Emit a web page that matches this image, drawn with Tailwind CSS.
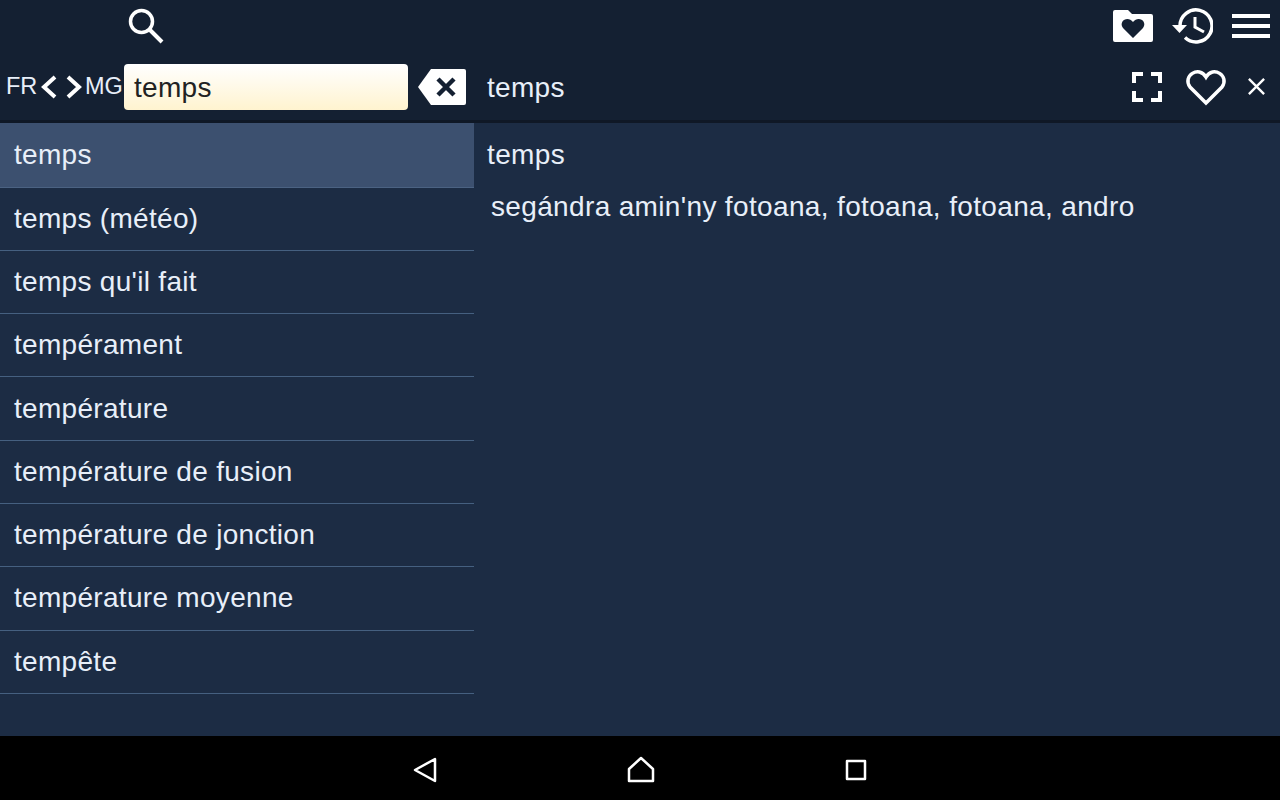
<!DOCTYPE html>
<html lang="en">
<head>
    <meta charset="UTF-8">
    <meta name="viewport" content="width=device-width, initial-scale=1.0">
    <title>Dictionary</title>
    <script src="https://cdn.jsdelivr.net/npm/@tailwindcss/browser@4"></script>
</head>
<body class="w-[1280px] h-[800px] overflow-hidden flex flex-col bg-[#1c2c44] font-['Liberation_Sans',sans-serif] text-[#e8eff9]">
    <!-- top toolbar -->
    <header class="h-[123px] shrink-0 flex flex-col bg-[#142032] border-b-[3px] border-[#0f1826]">
        <div class="h-[52px] flex items-center">
            <div class="w-[474px] pl-[125px] pt-[1px]">
                <svg class="w-[40px] h-[40px]" viewBox="0 0 40 40" fill="none" stroke="#fff" stroke-width="3.5">
                    <circle cx="16.500" cy="14.500" r="11"/>
                    <path d="M25 23L37 35" stroke-width="4"/>
                </svg>
            </div>
            <div class="flex-1 flex items-center justify-end pr-[10px]">
                <svg class="w-[42px] h-[34px]" viewBox="0 0 42 34">
                    <path fill="#fff" d="M3 1h13l4 4h19a2 2 0 0 1 2 2v24a2 2 0 0 1-2 2H3a2 2 0 0 1-2-2V3a2 2 0 0 1 2-2z"/>
                    <path fill="#142032" d="M21 29l-10-10c-5-7 5-13 10-6 5-7 15-1 10 6z"/>
                </svg>
                <svg class="w-[42px] h-[38px] ml-[17px]" viewBox="0 0 42 38" fill="none" stroke="#fff">
                    <path stroke-width="3.500" d="M9 19a16 16 0 1 1 5 11.500"/>
                    <path fill="#fff" stroke="none" d="M1 18h15l-7.500 8z"/>
                    <path stroke-width="3" d="M24 10v10l9 5"/>
                </svg>
                <div class="w-[38px] ml-[19px] flex flex-col gap-[6px]">
                    <div class="h-[4px] bg-white"></div>
                    <div class="h-[4px] bg-white"></div>
                    <div class="h-[4px] bg-white"></div>
                </div>
            </div>
        </div>
        <div class="h-[68px] flex items-center">
            <div class="w-[474px] flex items-center pl-[6px] pt-[1px]">
                <span class="w-[32px] text-[23.500px]">FR</span>
                <svg class="w-[20px] h-[24px] ml-[2px] shrink-0" viewBox="0 0 20 24" fill="none" stroke="#fff" stroke-width="4"><path d="M15 2L4 12l11 10"/></svg>
                <svg class="w-[20px] h-[24px] ml-[3px] shrink-0" viewBox="0 0 20 24" fill="none" stroke="#fff" stroke-width="4"><path d="M5 2l11 10L5 22"/></svg>
                <span class="w-[39px] text-[23.500px] ml-[2px]">MG</span>
                <div class="w-[284px] h-[46px] shrink-0 rounded-[4px] bg-gradient-to-b from-white to-[#fff3cf] flex items-center pl-[10px] pt-[2px] text-[28px] tracking-[0.3px] text-[#222]">temps</div>
                <svg class="w-[50px] h-[38px] ml-[9px] shrink-0" viewBox="0 0 50 38">
                    <path fill="#fff" d="M14 1h33a2 2 0 0 1 2 2v32a2 2 0 0 1-2 2H14L1 19z"/>
                    <path fill="none" stroke="#142032" stroke-width="4.500" d="M21 11l16 16M37 11L21 27"/>
                </svg>
            </div>
            <div class="flex-1 flex items-center pl-[13px] pr-[14px] pt-[1px]">
                <span class="text-[28px] tracking-[0.3px] flex-1 pt-[2px]">temps</span>
                <svg class="w-[30px] h-[30px] mr-[23px]" viewBox="0 0 30 30" fill="none" stroke="#fff" stroke-width="4">
                    <path d="M2 11V2h9M19 2h9v9M28 19v9h-9M11 28H2v-9"/>
                </svg>
                <svg class="w-[42px] h-[38px] mr-[20px]" viewBox="0 0 42 38" fill="none" stroke="#fff" stroke-width="3.500">
                    <path d="M21 35L5 19C-3 8 14-3 21 9 28-3 45 8 37 19z"/>
                </svg>
                <svg class="w-[19px] h-[19px]" viewBox="0 0 20 20" fill="none" stroke="#fff" stroke-width="2.500"><path d="M2 2l16 16M18 2L2 18"/></svg>
            </div>
        </div>
    </header>

    <main class="flex-1 flex min-h-0">
        <ul class="w-[474px] shrink-0 text-[28px] tracking-[0.3px] leading-[34px]">
            <li class="h-[64.500px] flex items-center pl-[14px] bg-[#3c506f] border-b border-[#4b6282]">temps</li>
            <li class="h-[63.300px] flex items-center pl-[14px] border-b border-[#456080]">temps (météo)</li>
            <li class="h-[63.300px] flex items-center pl-[14px] border-b border-[#456080]">temps qu'il fait</li>
            <li class="h-[63.300px] flex items-center pl-[14px] border-b border-[#456080]">tempérament</li>
            <li class="h-[63.300px] flex items-center pl-[14px] border-b border-[#456080]">température</li>
            <li class="h-[63.300px] flex items-center pl-[14px] border-b border-[#456080]">température de fusion</li>
            <li class="h-[63.300px] flex items-center pl-[14px] border-b border-[#456080]">température de jonction</li>
            <li class="h-[63.300px] flex items-center pl-[14px] border-b border-[#456080]">température moyenne</li>
            <li class="h-[63.300px] flex items-center pl-[14px] border-b border-[#456080]">tempête</li>
        </ul>
        <section class="flex-1 text-[28px] tracking-[0.35px] leading-[34px] pl-[13px] pt-[15px]">
            <p>temps</p>
            <p class="pl-[4px] mt-[18px]">segándra amin'ny fotoana, fotoana, fotoana, andro</p>
        </section>
    </main>

    <!-- android nav bar -->
    <footer class="h-[64px] shrink-0 bg-black flex items-center justify-center gap-[189px] pt-[4px]">
        <svg class="w-[26px] h-[28px]" viewBox="0 0 26 28" fill="none" stroke="#fff" stroke-width="2.500" stroke-linejoin="round"><path d="M23 3v22L3 14z"/></svg>
        <svg class="w-[28px] h-[28px]" viewBox="0 0 28 28" fill="none" stroke="#fff" stroke-width="2.500" stroke-linejoin="round"><path d="M14 2L2 13v12h24V13z"/></svg>
        <svg class="w-[24px] h-[24px]" viewBox="0 0 24 24" fill="none" stroke="#fff" stroke-width="2.500" stroke-linejoin="round"><path d="M3 3h18v18H3z"/></svg>
    </footer>
</body>
</html>
